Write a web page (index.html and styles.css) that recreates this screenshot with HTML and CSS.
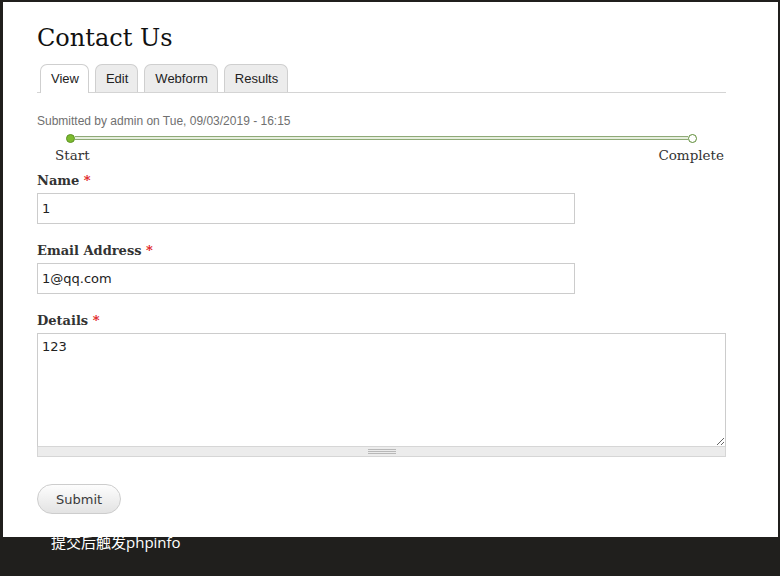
FILE: index.html
```html
<!DOCTYPE html>
<html lang="en">
<head>
<meta charset="utf-8">
<title>Contact Us</title>
<link rel="stylesheet" href="styles.css">
</head>
<body>
<div class="page">
  <div class="panel">
    <h1 class="title">Contact Us</h1>
    <ul class="tabs">
      <li class="tab active">View</li>
      <li class="tab">Edit</li>
      <li class="tab">Webform</li>
      <li class="tab">Results</li>
    </ul>
    <div class="submitted">Submitted by admin on Tue, 09/03/2019 - 16:15</div>
    <div class="progress">
      <div class="track"><span class="dot done"></span><span class="bar"></span><span class="dot"></span></div>
      <div class="steps"><span>Start</span><span>Complete</span></div>
    </div>
    <form class="form">
      <div class="item">
        <label class="label">Name <span class="req">*</span></label>
        <input class="text" type="text" value="1">
      </div>
      <div class="item">
        <label class="label">Email Address <span class="req">*</span></label>
        <input class="text" type="text" value="1@qq.com">
      </div>
      <div class="item">
        <label class="label">Details <span class="req">*</span></label>
        <div class="area-wrap">
          <textarea class="area">123</textarea>
          <div class="grippie"><span class="grip"></span></div>
        </div>
      </div>
      <button class="submit" type="button">Submit</button>
    </form>
  </div>
  <div class="caption">提交后触发phpinfo</div>
</div>
</body>
</html>
```
FILE: styles.css
```css
html, body {
  margin: 0;
  padding: 0;
  background: #201f1d;
}
.page {
  width: 780px;
  height: 576px;
  overflow: hidden;
}
.panel {
  margin: 2px 2px 0 3px;
  background: #fff;
  padding: 0 0 23px 34px;
  color: #333;
}
.title {
  margin: 0;
  padding-top: 21px;
  font-family: "DejaVu Serif", serif;
  font-weight: normal;
  font-size: 24px;
  line-height: 30px;
  color: #111;
}
.tabs {
  list-style: none;
  margin: 11px 0 0;
  padding: 0 0 0 3px;
  width: 686px;
  display: flex;
  gap: 6px;
  border-bottom: 1px solid #d4d4d4;
  height: 28px;
}
.tab {
  height: 27px;
  line-height: 27px;
  padding: 0 9px 0 10px;
  border: 1px solid #cfcfcf;
  border-bottom: none;
  border-radius: 7px 7px 0 0;
  background: #ececec;
  font-family: "Liberation Sans", Arial, sans-serif;
  font-size: 13px;
  color: #222;
}
.tab.active {
  background: #fff;
  height: 28px;
}
.submitted {
  margin-top: 20px;
  font-family: "Liberation Sans", Arial, sans-serif;
  font-size: 12px;
  line-height: 16px;
  color: #707070;
}
.progress {
  width: 689px;
  margin-top: 4px;
}
.track {
  display: flex;
  align-items: center;
  height: 10px;
  margin: 0 29px;
}
.dot {
  width: 7px;
  height: 7px;
  border-radius: 50%;
  border: 1.5px solid #5b8a34;
  background: #fff;
  flex: none;
}
.dot.done {
  background: #7cbb2e;
  border-color: #5e9326;
}
.bar {
  flex: 1;
  height: 2px;
  border-top: 1px solid #8faa77;
  border-bottom: 1px solid #8faa77;
  background: #e6eedd;
}
.steps {
  display: flex;
  justify-content: space-between;
  margin: 2px 2px 0 18px;
  font-family: "DejaVu Serif", serif;
  font-size: 13.5px;
  line-height: 20px;
  color: #333;
}
.form {
  margin: 0;
}
.item {
  display: flex;
  flex-direction: column;
  align-items: flex-start;
  margin-top: 19px;
}
.item:first-child {
  margin-top: 8px;
}
.label {
  font-family: "DejaVu Serif", serif;
  font-weight: bold;
  font-size: 13px;
  line-height: 16px;
  color: #333;
  margin-bottom: 4px;
}
.req {
  color: #e0211b;
}
.text {
  box-sizing: border-box;
  width: 538px;
  height: 31px;
  margin: 0;
  padding: 0 4px;
  border: 1px solid #cccccc;
  font-family: "DejaVu Sans", sans-serif;
  font-size: 13px;
  color: #222;
  outline: none;
}
.area-wrap {
  width: 689px;
}
.area {
  display: block;
  box-sizing: border-box;
  width: 689px;
  height: 114px;
  margin: 0;
  padding: 4px 4px;
  border: 1px solid #cccccc;
  border-bottom: 1px solid #d6d6d6;
  font-family: "DejaVu Sans", sans-serif;
  font-size: 13px;
  line-height: 18px;
  color: #222;
  resize: vertical;
  outline: none;
}
.grippie {
  box-sizing: border-box;
  height: 10px;
  background: #ececec;
  border: 1px solid #d6d6d6;
  border-top: none;
  display: flex;
  justify-content: center;
  align-items: center;
}
.grip {
  width: 28px;
  height: 5px;
  background: repeating-linear-gradient(#b8b8b8 0 1px, transparent 1px 2px);
}
.submit {
  margin-top: 27px;
  height: 30px;
  padding: 0 18px;
  border: 1px solid #cdcdcd;
  border-radius: 15px;
  background: linear-gradient(#fdfdfd, #e3e3e3);
  font-family: "DejaVu Sans", sans-serif;
  font-size: 13px;
  color: #3a3a3a;
}
.caption {
  margin-top: -2px;
  margin-left: 51px;
  font-family: "Open Sans", "Noto Sans CJK SC", sans-serif;
  font-size: 15px;
  line-height: 15px;
  color: #fff;
}
```
